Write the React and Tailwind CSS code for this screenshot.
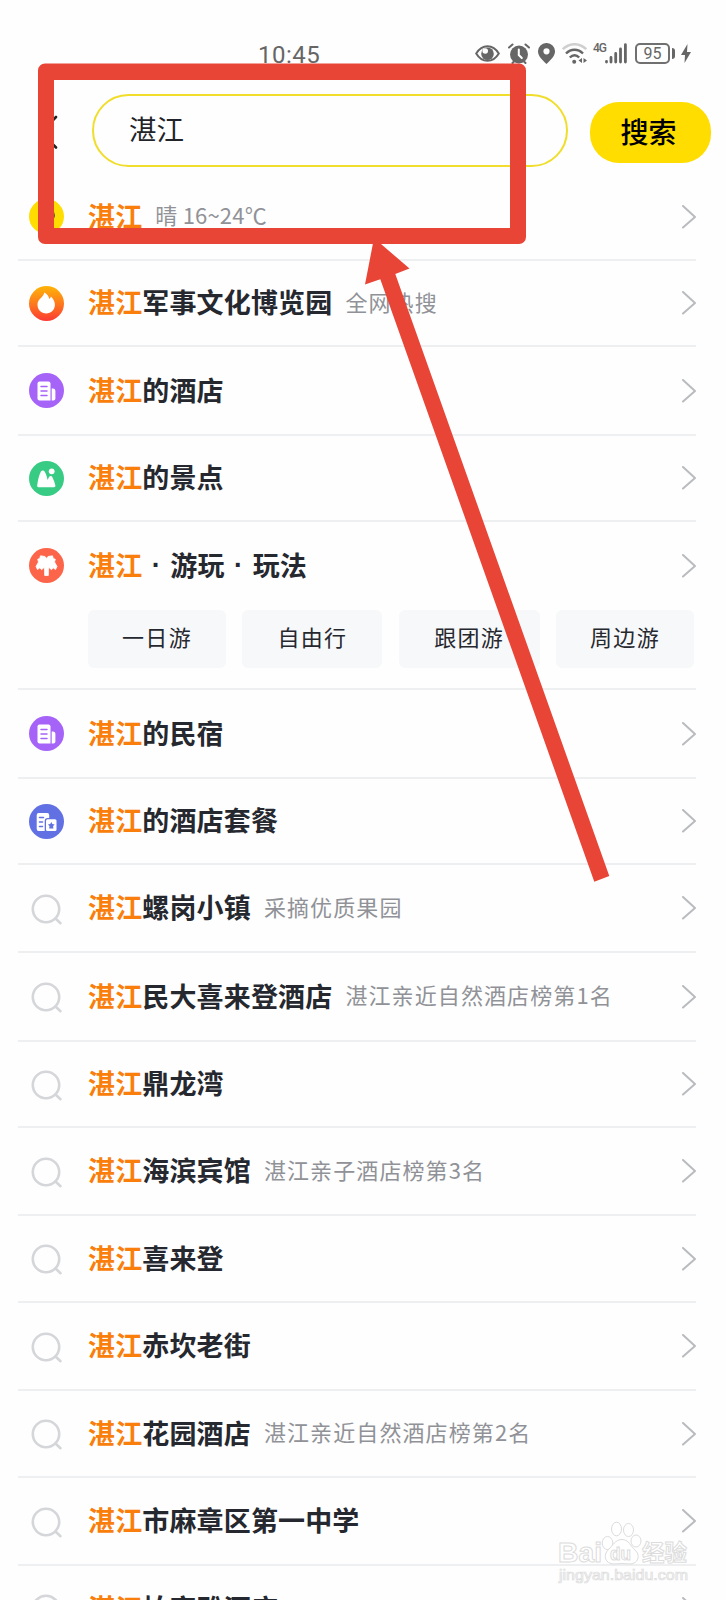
import React from 'react';

const KEYWORD = '湛江';

const tabs = [
    { label: '一日游', box: 'w-[138px]' },
    { label: '自由行', box: 'w-[140px]' },
    { label: '跟团游', box: 'w-[141px]' },
    { label: '周边游', box: 'w-[138px]' },
];

const rows = [
    { icon: 'pin', parts: [], note: '晴 16~24℃', noteSpacing: 'tracking-[0.2px]', height: 'h-[87px]' },
    { icon: 'fire', parts: ['军事文化博览园'], note: '全网热搜', height: 'h-[86px]' },
    { icon: 'hotel', parts: ['的酒店'], height: 'h-[89px]' },
    { icon: 'scenic', parts: ['的景点'], height: 'h-[86px]' },
    { icon: 'palm', parts: ['·', '游玩', '·', '玩法'], height: 'h-[168px]', tabs: true },
    { icon: 'hotel', parts: ['的民宿'], height: 'h-[89px]' },
    { icon: 'package', parts: ['的酒店套餐'], height: 'h-[86px]' },
    { icon: 'search', parts: ['螺岗小镇'], note: '采摘优质果园', height: 'h-[88px]' },
    { icon: 'search', parts: ['民大喜来登酒店'], note: '湛江亲近自然酒店榜第1名', height: 'h-[89px]' },
    { icon: 'search', parts: ['鼎龙湾'], height: 'h-[86px]' },
    { icon: 'search', parts: ['海滨宾馆'], note: '湛江亲子酒店榜第3名', height: 'h-[88px]' },
    { icon: 'search', parts: ['喜来登'], height: 'h-[87px]' },
    { icon: 'search', parts: ['赤坎老街'], height: 'h-[88px]' },
    { icon: 'search', parts: ['花园酒店'], note: '湛江亲近自然酒店榜第2名', height: 'h-[87px]' },
    { icon: 'search', parts: ['市麻章区第一中学'], height: 'h-[88px]' },
    { icon: 'search', parts: ['柏家雅酒店'], height: 'h-[87px]' },
];

const RowIcon = ({ name }) => {
    if (name === 'search') {
        return (
            <svg className="w-[35px] h-[35px] shrink-0" viewBox="0 0 35 35" fill="none" stroke="#d5d6da" strokeWidth="2.6" strokeLinecap="round">
                <circle cx="17" cy="18" r="13.2" />
                <path d="M26.5 27.5 31.500 32.200" />
            </svg>
        );
    }

    return (
        <svg className="w-[35px] h-[35px] shrink-0" viewBox="0 0 35 35">
            {name === 'pin' && (
                <>
                    <circle cx="17.5" cy="17.5" r="17.5" fill="#ffdd00" />
                    <path d="M17.5 8a8.3 8.3 0 0 1 8.3 8.3c0 4.700-5.300 8.700-8.300 11.200-3-2.500-8.300-6.500-8.300-11.200A8.300 8.300 0 0 1 17.500 8z" fill="#33312a" />
                </>
            )}
            {name === 'fire' && (
                <>
                    <defs>
                        <linearGradient id="fire" x1="0" y1="0" x2="0" y2="1">
                            <stop offset="0" stopColor="#ffb408" />
                            <stop offset="0.5" stopColor="#fd7a1c" />
                            <stop offset="1" stopColor="#fc3a34" />
                        </linearGradient>
                    </defs>
                    <circle cx="17.5" cy="17.5" r="17.5" fill="url(#fire)" />
                    <path d="M15.300 6.500c2.800 1.200 4.500 3.700 5 6.500.9-.6 1.400-1.500 1.600-2.500 2.500 2.400 4 5.200 4 8.300 0 5-3.800 8.700-8.700 8.700s-8.700-3.700-8.700-8.500c0-4 2.200-5.800 4.500-8.200 1.300-1.300 2-2.500 2.300-4.300z" fill="#fff" />
                </>
            )}
            {name === 'hotel' && (
                <>
                    <circle cx="17.5" cy="17.5" r="17.5" fill="#a663f8" />
                    <path d="M10.500 8.500h9a2 2 0 0 1 2 2v17h-11a2 2 0 0 1-2-2v-15a2 2 0 0 1 2-2z" fill="#fff" />
                    <path d="M22.700 15.500h1.200a2.500 2.500 0 0 1 2.500 2.500v7.500a2 2 0 0 1-2 2h-1.700z" fill="#fff" />
                    <path d="M12 13.500h6M12 18h6M12 22.500h6" stroke="#a663f8" strokeWidth="1.500" strokeLinecap="round" />
                </>
            )}
            {name === 'scenic' && (
                <>
                    <circle cx="17.5" cy="17.5" r="17.5" fill="#38cb83" />
                    <circle cx="22.700" cy="10.300" r="2.900" fill="#fff" />
                    <path d="M8.200 24.200c.7-5.500 2-10.500 3.700-13.600.9-1.600 2.800-1.600 3.700-.1 1.400 2.200 2.300 5.200 3 8.400l1.300-2.700c.9-1.700 2.700-1.700 3.500 0 1.300 2.500 2.300 5.300 3 8.400.2 1-.5 1.600-1.400 1.600H9.500c-.9 0-1.500-.8-1.300-2z" fill="#fff" />
                </>
            )}
            {name === 'palm' && (
                <>
                    <circle cx="17.5" cy="17.5" r="17.5" fill="#fd654b" />
                    <path d="M17.500 10.500 16 8.500l-4.500-.7-.8 2.700-2 .8.800 2.700-2.500 4.500 1.500 3 2.500-1.800 1.500 2 3-2.500.2 8.300h3.600l.2-8.300 3 2.500 1.500-2 2.500 1.800 1.500-3-2.500-4.500.8-2.700-2-.8-.8-2.700-4.500.7z" fill="#fff" stroke="#fff" strokeWidth="0.800" strokeLinejoin="round" />
                </>
            )}
            {name === 'package' && (
                <>
                    <circle cx="17.5" cy="17.5" r="17.5" fill="#6170e2" />
                    <path d="M9.700 9h8.500a2 2 0 0 1 2 2v3h-1.500a3 3 0 0 0-3 3v10h-6a2 2 0 0 1-2-2V11a2 2 0 0 1 2-2z" fill="#fff" />
                    <rect x="17" y="15.200" width="10.500" height="11.800" rx="1.500" fill="#fff" />
                    <path d="M10.500 13.500h4M10.500 18h3M10.500 22.500h3" stroke="#6170e2" strokeWidth="1.500" strokeLinecap="round" />
                    <path d="m22.300 18 1.100 2.100 2.300.4-1.600 1.600.3 2.300h-4.200l.3-2.300-1.600-1.600 2.300-.4z" fill="#6170e2" />
                </>
            )}
        </svg>
    );
};

const Chevron = () => (
    <svg className="w-4 h-6 shrink-0 ml-auto" viewBox="0 0 16 24" fill="none" stroke="#b9bbbf" strokeWidth="2" strokeLinecap="round" strokeLinejoin="round">
        <path d="M3 1 15 12 3 22.500" />
    </svg>
);

const StatusBar = () => (
    <div className="h-[86px] pt-[43px] flex items-start text-[#666]">
        <span className="ml-[258px] mt-px w-[217px] text-2xl leading-[22px] font-['Roboto',sans-serif] tracking-[0.500px]">10:45</span>
        <svg className="w-[25px] h-5 mt-px" viewBox="0 0 25 20" fill="none" stroke="currentColor" strokeWidth="2">
            <path d="M1.200 9.500C7-.300 18-.300 23.800 9.500 18 19.300 7 19.300 1.200 9.500z" />
            <circle cx="12.500" cy="9.700" r="6.300" fill="currentColor" stroke="none" />
            <circle cx="10.200" cy="7" r="2.800" fill="#fefefe" stroke="none" />
        </svg>
        <svg className="ml-2 w-[22px] h-[22px]" viewBox="0 0 22 22" fill="none" stroke="currentColor" strokeWidth="2" strokeLinecap="round">
            <circle cx="11" cy="11.500" r="9" fill="currentColor" stroke="none" />
            <path d="M1 4.500 4.500 1.500M21 4.500 17.500 1.500M4.500 20l2-2M17.500 20l-2-2" />
            <path d="M10.800 6.500V12l3 3" stroke="#fff" />
        </svg>
        <svg className="ml-2 w-[17px] h-[21px]" viewBox="0 0 17 21">
            <path fillRule="evenodd" d="M8.500 0A8.300 8.300 0 0 1 17 8.500c0 5-5 9-8.500 12.500C5 17.500 0 13.500 0 8.500A8.300 8.300 0 0 1 8.500 0zm0 5.200a3.100 3.100 0 1 0 0 6.200 3.100 3.100 0 0 0 0-6.200z" fill="currentColor" />
        </svg>
        <svg className="ml-[7px] w-[25px] h-[21px]" viewBox="0 0 25 21" fill="none" stroke="currentColor" strokeWidth="2.400">
            <path d="M.8 6.200C7.500-.5 17.500-.5 24.200 6.200" stroke="#cfcfcf" />
            <path d="M4 10.500c5-5 12-5 17 0M7.800 14.500c3-3 6.500-3 9.400 0" />
            <circle cx="12.200" cy="18.700" r="2" fill="currentColor" stroke="none" />
            <path d="M20 15v5l-3.500-2.500zM21.500 15v5l3.500-2.500z" fill="currentColor" stroke="none" />
        </svg>
        <span className="ml-[6px] w-3 text-xs leading-[11px] font-medium font-['Roboto',sans-serif] tracking-[-1px]">4G</span>
        <svg className="w-[22px] h-[21px]" viewBox="0 0 22 21" fill="none" stroke="currentColor" strokeWidth="2.800" strokeLinecap="round">
            <path d="M1.500 18.500v.5M6 14.500v4.500M10.700 10.500v8.500M15.500 6v13M20.400 1.700v17.300" />
        </svg>
        <span className="ml-2 w-[35px] h-[21px] rounded-[5px] border-2 border-[#707070] text-base leading-[18px] text-center font-['Roboto',sans-serif]">95</span>
        <span className="ml-[2px] mt-[5px] w-[3px] h-[11px] rounded-r-sm bg-[#666]" />
        <svg className="ml-[6px] mt-px w-[10px] h-[19px]" viewBox="0 0 10 19" fill="currentColor">
            <path d="M6.500 0 0 11h4L3.500 19 10 8H6z" />
        </svg>
    </div>
);

const SearchHeader = () => (
    <div className="h-[88px] pt-2 flex items-start">
        <svg className="ml-10 mt-5 w-5 h-9" viewBox="0 0 20 36" fill="none" stroke="#222" strokeWidth="2.600" strokeLinecap="round">
            <path d="M16 3 1 18.500l15 15" />
        </svg>
        <div className="ml-8 w-[476px] h-[73px] rounded-full border-2 border-[#f0dd2c] pl-[35px] pb-1 flex items-center">
            <span className="text-[27.500px] text-[#22242a]">{KEYWORD}</span>
        </div>
        <button className="ml-[22px] mt-2 w-[121px] h-[61px] rounded-[29px] bg-[#ffdd00] pb-1 pr-1 text-[28px] text-black font-medium">搜索</button>
    </div>
);

const ResultRow = ({ row }) => (
    <li className={`${row.height} border-b-2 border-[#eeeff0]`}>
        <div className={`${row.tabs ? 'h-[87px]' : 'h-full'} flex items-center pl-[11px]`}>
            <RowIcon name={row.icon} />
            <p className="ml-6 pb-px flex items-center text-[27px] tracking-[0.150px] font-bold text-[#26282f]">
                <span className="text-[#f97e0c]">{KEYWORD}</span>
                {row.parts.map((part, i) => (
                    <span key={i} className={part === '·' ? "w-7 text-center font-['Liberation_Sans',sans-serif]" : ''}>{part}</span>
                ))}
                {row.note && (
                    <span className={`ml-[13px] pb-[3px] text-[22px] font-normal text-[#909297] ${row.noteSpacing || 'tracking-[1.100px]'}`}>{row.note}</span>
                )}
            </p>
            <Chevron />
        </div>
        {row.tabs && (
            <div className="ml-[70px] mt-px w-[606px] flex justify-between">
                {tabs.map((tab) => (
                    <span key={tab.label} className={`${tab.box} h-[58px] rounded-md bg-[#f7f8fa] pb-1.5 flex items-center justify-center text-[22px] tracking-[1.300px] text-[#26282f]`}>
                        {tab.label}
                    </span>
                ))}
            </div>
        )}
    </li>
);

// Red frame round the search box and the arrow that points at it
const Annotation = () => (
    <svg className="absolute left-0 top-0 w-[727px] h-[1600px] pointer-events-none" viewBox="0 0 727 1600" fill="#e94537">
        <path fillRule="evenodd" d="M45 63.500H519a7 7 0 0 1 7 7V237a7 7 0 0 1-7 7H45a7 7 0 0 1-7-7V70.500a7 7 0 0 1 7-7zM54 80V228H510V80z" />
        <path d="M374 238 409.500 268.500 395.300 274 609.300 876 594.300 881.700 380.300 279.300 365 284.500z" />
    </svg>
);

const Watermark = () => (
    <svg className="absolute left-[550px] top-[1515px] w-[150px] h-[75px] pointer-events-none" viewBox="0 0 150 75" fill="#fff" stroke="#dcdcdc" strokeWidth="1">
        <text x="8" y="47" textLength="44" lengthAdjust="spacingAndGlyphs" className="text-[28px] font-bold font-['Liberation_Sans',sans-serif]">Bai</text>
        <ellipse cx="57.500" cy="28" rx="5.300" ry="6.500" />
        <ellipse cx="66.500" cy="14" rx="5" ry="6.800" />
        <ellipse cx="78.500" cy="15" rx="5" ry="6.500" />
        <ellipse cx="86" cy="26" rx="5" ry="6" />
        <path d="M72 24.500c7 0 8.500 7 13 10.500 6 5 3 14-5 14-3 0-5-.5-8-.5s-5 .5-8 .5c-9 0-11.500-9-5.500-14.500 4.500-4 6.500-10 13.500-10z" />
        <text x="60" y="45" textLength="21" lengthAdjust="spacingAndGlyphs" className="text-[18px] font-bold font-['Liberation_Sans',sans-serif]">du</text>
        <text x="92" y="46" textLength="45" lengthAdjust="spacingAndGlyphs" className="text-[23px] font-bold">经验</text>
        <text x="9" y="65" textLength="129" lengthAdjust="spacingAndGlyphs" strokeWidth="0.700" className="text-[14px] font-['Liberation_Sans',sans-serif]">jingyan.baidu.com</text>
    </svg>
);

const App = () => {
    return (
        <div className="relative w-[727px] h-[1600px] overflow-hidden bg-[#fefefe] font-['Noto_Sans_CJK_SC',sans-serif]">
            <StatusBar />
            <SearchHeader />
            <ul className="ml-[18px] w-[678px]">
                {rows.map((row, index) => (
                    <ResultRow key={index} row={row} />
                ))}
            </ul>
            <Annotation />
            <Watermark />
        </div>
    );
};

export default App;
